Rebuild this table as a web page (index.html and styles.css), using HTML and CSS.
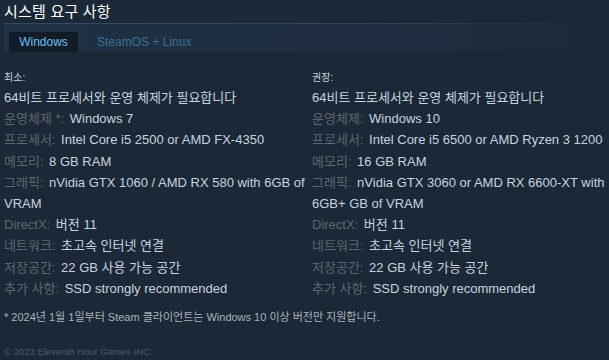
FILE: index.html
```html
<!DOCTYPE html>
<html lang="ko">
<head>
<meta charset="utf-8">
<link rel="stylesheet" href="styles.css">
</head>
<body>
<div class="page">
  <h2 class="title">시스템 요구 사항</h2>
  <div class="tabs">
    <div class="tab active">Windows</div>
    <div class="tab">SteamOS + Linux</div>
  </div>
  <div class="cols">
    <ul class="col">
      <li class="head">최소:</li>
      <li>64비트 프로세서와 운영 체제가 필요합니다</li>
      <li><span class="lbl">운영체제 *:</span> Windows 7</li>
      <li><span class="lbl">프로세서:</span> Intel Core i5 2500 or AMD FX-4350</li>
      <li><span class="lbl">메모리:</span> 8 GB RAM</li>
      <li><span class="lbl">그래픽:</span> nVidia GTX 1060 / AMD RX 580 with 6GB of VRAM</li>
      <li><span class="lbl">DirectX:</span> 버전 11</li>
      <li><span class="lbl">네트워크:</span> 초고속 인터넷 연결</li>
      <li><span class="lbl">저장공간:</span> 22 GB 사용 가능 공간</li>
      <li><span class="lbl">추가 사항:</span> SSD strongly recommended</li>
    </ul>
    <ul class="col">
      <li class="head">권장:</li>
      <li>64비트 프로세서와 운영 체제가 필요합니다</li>
      <li><span class="lbl">운영체제:</span> Windows 10</li>
      <li><span class="lbl">프로세서:</span> Intel Core i5 6500 or AMD Ryzen 3 1200</li>
      <li><span class="lbl">메모리:</span> 16 GB RAM</li>
      <li><span class="lbl">그래픽:</span> nVidia GTX 3060 or AMD RX 6600-XT with 6GB+ GB of VRAM</li>
      <li><span class="lbl">DirectX:</span> 버전 11</li>
      <li><span class="lbl">네트워크:</span> 초고속 인터넷 연결</li>
      <li><span class="lbl">저장공간:</span> 22 GB 사용 가능 공간</li>
      <li><span class="lbl">추가 사항:</span> SSD strongly recommended</li>
    </ul>
  </div>
  <p class="note">* 2024년 1월 1일부터 Steam 클라이언트는 Windows 10 이상 버전만 지원합니다.</p>
  <p class="copy">© 2023 Eleventh Hour Games INC</p>
</div>
</body>
</html>
```

FILE: styles.css
```css
html, body {
  margin: 0;
  padding: 0;
  background: #1b2838;
}
body {
  font-family: "Liberation Sans", Arial, "Noto Sans CJK KR", sans-serif;
  color: #acb2b8;
}
.page {
  width: 609px;
  height: 360px;
  overflow: hidden;
}
.title {
  margin: 0;
  padding: 2px 0 0 4px;
  height: 21px;
  font-size: 15px;
  font-weight: normal;
  color: #ffffff;
  line-height: 18px;
  letter-spacing: 0.2px;
  font-family: "Noto Sans CJK KR", sans-serif;
}
.tabs {
  margin: 0 0 0 4px;
  width: 605px;
  border-top: 1px solid;
  border-image: linear-gradient(90deg, #2d4d68 0%, #2a4660 60%, #1b2838 100%) 1;
  background: linear-gradient(90deg, #1f3044 0%, #1e2d3f 70%, #1b2838 100%);
  display: flex;
  align-items: flex-end;
  padding-left: 5px;
  box-sizing: border-box;
  height: 29px;
}
.tab {
  height: 20px;
  line-height: 20px;
  font-size: 12px;
  padding: 0 10px;
  color: #3b6d92;
  margin-right: 1px;
}
.tab.active {
  background: #121b26;
  color: #67c1f5;
  width: 69px;
  box-sizing: border-box;
  padding: 0;
  text-align: center;
  margin-right: 9px;
}
.cols {
  display: grid;
  grid-template-columns: 302px 297px;
  column-gap: 6px;
  padding: 17px 0 0 4px;
}
.col {
  list-style: none;
  margin: 0;
  padding: 0;
  font-size: 13px;
  line-height: 21.2px;
  color: #c6d4df;
}
.col .head {
  font-size: 10px;
  line-height: 18px;
  color: #c6d4df;
}
.lbl {
  color: #5e666e;
  margin-right: 2px;
}
.note {
  margin: 10px 0 0 4px;
  font-size: 11px;
  line-height: 16px;
  color: #acb2b8;
}
.copy {
  margin: 21px 0 0 4px;
  font-size: 9.5px;
  color: #4b5966;
}
```
